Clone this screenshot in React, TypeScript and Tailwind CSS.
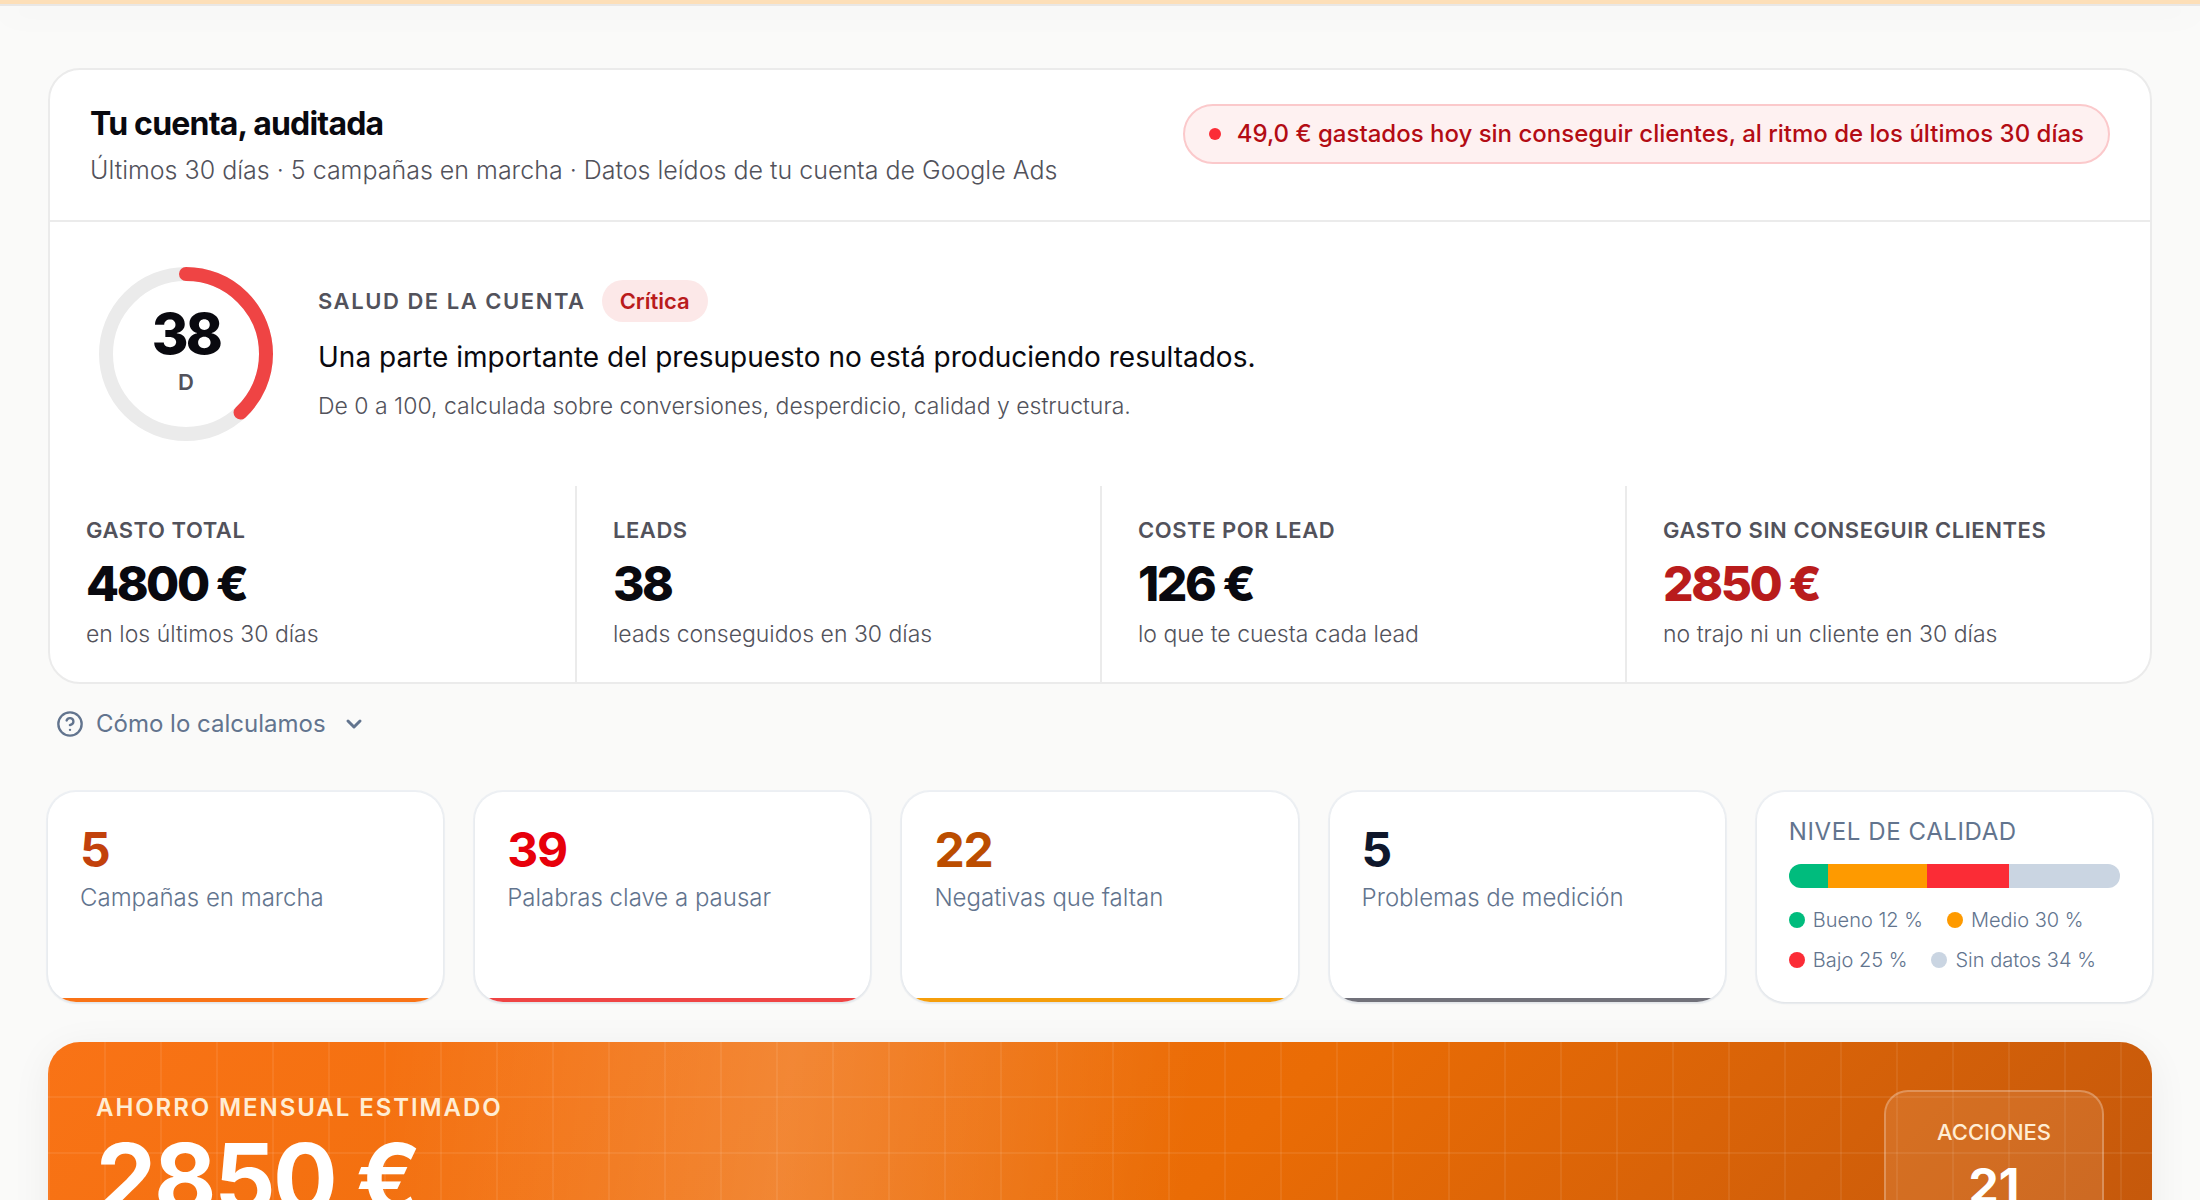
import { useState } from 'react';
import { ChevronDown, CircleQuestionMark } from 'lucide-react';

interface Stat {
  label: string;
  value: string;
  note: string;
  danger?: boolean;
}

interface Counter {
  value: string;
  label: string;
  color: string;
  bar: string;
}

interface QualityLevel {
  label: string;
  percent: number;
  color: string;
}

const SCORE = 38;

const STATS: Stat[] = [
  { label: 'GASTO TOTAL', value: '4800 €', note: 'en los últimos 30 días' },
  { label: 'LEADS', value: '38', note: 'leads conseguidos en 30 días' },
  { label: 'COSTE POR LEAD', value: '126 €', note: 'lo que te cuesta cada lead' },
  { label: 'GASTO SIN CONSEGUIR CLIENTES', value: '2850 €', note: 'no trajo ni un cliente en 30 días', danger: true },
];

const COUNTERS: Counter[] = [
  { value: '5', label: 'Campañas en marcha', color: 'text-[#c2410c]', bar: 'bg-[#f97316]' },
  { value: '39', label: 'Palabras clave a pausar', color: 'text-[#e7000b]', bar: 'bg-[#ef4444]' },
  { value: '22', label: 'Negativas que faltan', color: 'text-[#bb4d00]', bar: 'bg-[#f59e0b]' },
  { value: '5', label: 'Problemas de medición', color: 'text-[#0f172b]', bar: 'bg-[#71717a]' },
];

const QUALITY: QualityLevel[] = [
  { label: 'Bueno', percent: 12, color: 'bg-[#00bc7d]' },
  { label: 'Medio', percent: 30, color: 'bg-[#fe9a00]' },
  { label: 'Bajo', percent: 25, color: 'bg-[#fb2c36]' },
  { label: 'Sin datos', percent: 34, color: 'bg-[#cad5e2]' },
];

function ScoreRing({ score, grade }: { score: number; grade: string }) {
  const radius = 80;
  const length = 2 * Math.PI * radius;

  return (
    <div className="grid size-48 flex-shrink-0 place-items-center">
      <svg className="col-start-1 row-start-1 size-48 -rotate-90" viewBox="0 0 192 192" fill="none" strokeWidth="14">
        <circle cx="96" cy="96" r={radius} stroke="#ebebeb" />
        <circle
          cx="96"
          cy="96"
          r={radius}
          stroke="#ef4444"
          strokeLinecap="round"
          strokeDasharray={`${(length * score) / 100} ${length}`}
        />
      </svg>
      <div className="col-start-1 row-start-1 flex flex-col items-center pb-2">
        <span className="text-[56px] leading-[60px] font-extrabold tracking-tighter text-[#09090f]">{score}</span>
        <span className="mt-1 text-[22px] leading-7 font-semibold text-[#52525b]">{grade}</span>
      </div>
    </div>
  );
}

function StatCell({ stat }: { stat: Stat }) {
  return (
    <div className="border-l-2 border-[#ebebeb] px-9 pt-7 pb-[30px] first:border-l-0">
      <div className="text-[22px] leading-8 font-semibold tracking-wide text-[#52525b]">{stat.label}</div>
      <div className={`mt-2 text-[48px] leading-[60px] font-extrabold tracking-tighter ${stat.danger ? 'text-[#b91c1c]' : 'text-[#09090f]'}`}>
        {stat.value}
      </div>
      <div className="mt-0.5 text-[23px] leading-9 font-light text-[#52525b]">{stat.note}</div>
    </div>
  );
}

function CounterCard({ counter }: { counter: Counter }) {
  return (
    <div className="flex flex-col overflow-hidden rounded-[28px] bg-white shadow-sm ring-2 ring-slate-200/50">
      <div className="flex-1 px-8 pt-8">
        <div className={`text-[48px] leading-[52px] font-bold tracking-tight ${counter.color}`}>{counter.value}</div>
        <div className="mt-1 text-[24px] leading-9 font-light text-[#62748e]">{counter.label}</div>
      </div>
      <div className={`h-1 ${counter.bar}`} />
    </div>
  );
}

function QualityCard() {
  return (
    <div className="rounded-[28px] bg-white px-8 pt-6 pb-[26px] shadow-sm ring-2 ring-slate-200/50">
      <div className="text-[24px] leading-8 tracking-wide text-[#62748e]">NIVEL DE CALIDAD</div>
      <div className="mt-4 flex h-6 overflow-hidden rounded-full">
        {QUALITY.map((level) => (
          <div key={level.label} className={level.color} style={{ flexGrow: level.percent }} />
        ))}
      </div>
      <ul className="mt-4 flex flex-wrap gap-x-6 gap-y-2 text-[20px] leading-8 font-light text-[#62748e]">
        {QUALITY.map((level) => (
          <li key={level.label} className="flex items-center gap-2 whitespace-nowrap">
            <span className={`size-4 rounded-full ${level.color}`} />
            {level.label} {level.percent} %
          </li>
        ))}
      </ul>
    </div>
  );
}

export default function App() {
  const [showMethod, setShowMethod] = useState(false);

  return (
    <div className="h-screen overflow-hidden bg-[#fafaf9] font-['Inter',sans-serif]">
      <header className="h-1.5 border-b-2 border-[#e9e7e5] bg-[#fddfb8] shadow-[0_8px_32px_rgba(0,0,0,0.06)]" />

      <main className="flex flex-col px-12 pt-[62px]">
        <section className="overflow-hidden rounded-[32px] border-2 border-[#ebebeb] bg-white">
          <div className="flex items-start justify-between border-b-2 border-[#ebebeb] px-10 pt-[34px] pb-[30px]">
            <div>
              <h1 className="text-[32px] leading-10 font-bold tracking-tight text-[#09090f]">Tu cuenta, auditada</h1>
              <p className="mt-1.5 text-[25px] leading-10 font-light text-[#52525b]">
                Últimos 30 días · 5 campañas en marcha · Datos leídos de tu cuenta de Google Ads
              </p>
            </div>
            <div className="flex items-center gap-4 rounded-full border-2 border-[#fbc9cb] bg-[#fef1f1] px-6 py-2 text-[24px] leading-10 font-medium text-[#b30c14]">
              <span className="size-3 rounded-full bg-[#fb2c36]" />
              49,0 € gastados hoy sin conseguir clientes, al ritmo de los últimos 30 días
            </div>
          </div>

          <div className="flex items-center gap-9 px-10 py-9">
            <ScoreRing score={SCORE} grade="D" />
            <div className="pb-1">
              <div className="flex items-center gap-4">
                <h2 className="text-[22px] leading-9 font-semibold tracking-[0.07em] text-[#52525b]">SALUD DE LA CUENTA</h2>
                <span className="rounded-full bg-[#fce8e8] px-[18px] py-1 text-[22px] leading-[34px] font-semibold text-[#b91c1c]">
                  Crítica
                </span>
              </div>
              <p className="mt-3 text-[28px] leading-[46px] text-[#09090f]">
                Una parte importante del presupuesto no está produciendo resultados.
              </p>
              <p className="mt-2 text-[23px] leading-9 font-light text-[#52525b]">
                De 0 a 100, calculada sobre conversiones, desperdicio, calidad y estructura.
              </p>
            </div>
          </div>

          <div className="grid grid-cols-4">
            {STATS.map((stat) => (
              <StatCell key={stat.label} stat={stat} />
            ))}
          </div>
        </section>

        <button
          type="button"
          aria-expanded={showMethod}
          onClick={() => setShowMethod(!showMethod)}
          className="mt-5 flex items-center gap-3 self-start px-2 text-[24px] leading-10 text-[#62748e]"
        >
          <CircleQuestionMark className="size-7" />
          Cómo lo calculamos
          <ChevronDown className="ml-1 size-6" strokeWidth={3} />
        </button>

        <section className="mt-12 grid grid-cols-5 gap-8">
          {COUNTERS.map((counter) => (
            <CounterCard key={counter.label} counter={counter} />
          ))}
          <QualityCard />
        </section>

        <section className="mt-10 overflow-hidden rounded-[32px] bg-linear-[135deg,#f97316,#ea6c05_55%,#c2570c] shadow-[0_8px_40px_rgba(0,0,0,0.06)]">
          <div className="bg-[linear-gradient(96deg,transparent_16%,rgba(255,255,255,0.17)_35%,transparent_54%)]">
            <div className="bg-[linear-gradient(rgba(255,255,255,0.07)_2px,transparent_2px),linear-gradient(90deg,rgba(255,255,255,0.07)_2px,transparent_2px)] bg-[length:56px_56px] bg-[position:0_-2px]">
              <div className="flex items-start justify-between p-12">
                <div>
                  <div className="text-[24px] leading-9 font-semibold tracking-[0.08em] text-[#ffedd4]">
                    AHORRO MENSUAL ESTIMADO
                  </div>
                  <div className="text-[96px] leading-[104px] font-bold tracking-tight text-white">2850 €</div>
                </div>
                <div className="flex min-w-[220px] flex-col items-center rounded-3xl border-2 border-white/25 bg-white/10 px-10 py-6">
                  <span className="text-[22px] leading-8 font-medium text-[#ffedd4]">ACCIONES</span>
                  <span className="mt-2 text-[48px] leading-[60px] font-bold text-white">21</span>
                </div>
              </div>
            </div>
          </div>
        </section>
      </main>
    </div>
  );
}
